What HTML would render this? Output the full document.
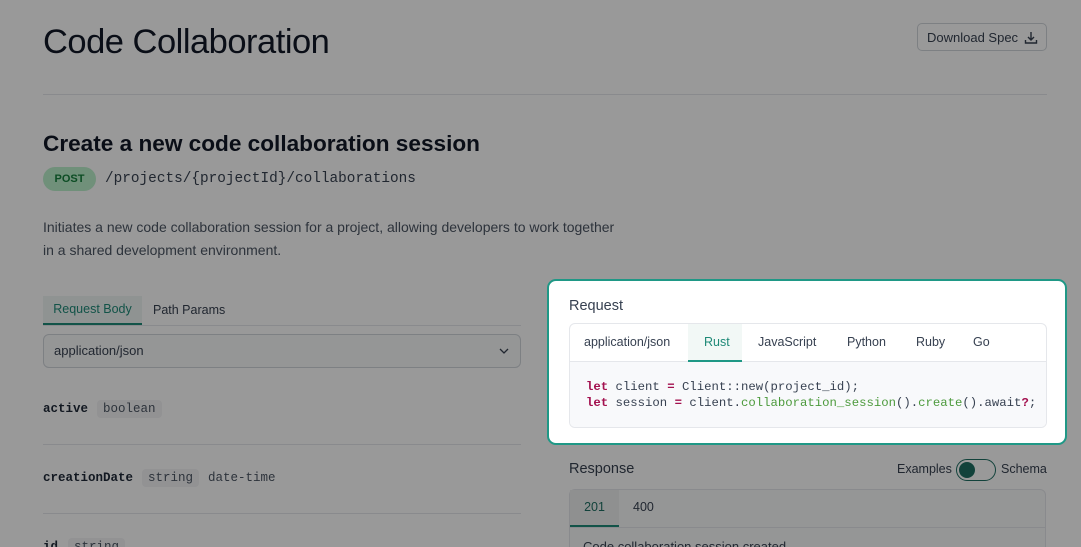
<!DOCTYPE html><html><head><style>
html,body{margin:0;width:1081px;height:547px;overflow:hidden}
body{background:#fff;font-family:"Liberation Sans",sans-serif;color:#1f2937;position:relative}
.a{position:absolute}
.mono{font-family:"Liberation Mono",monospace}
#ov{position:absolute;left:0;top:0;width:1081px;height:547px;background:rgba(0,0,0,0.4);z-index:5}
</style></head><body>
<div class="a" style="left:43px;top:23px;font-size:34.5px;letter-spacing:-0.5px;color:#111827">Code Collaboration</div>
<div class="a" style="left:917px;top:23px;height:28px;border:1px solid #d1d5db;border-radius:5px;font-size:13px;color:#374151;line-height:28px;padding-left:9px;box-sizing:border-box;width:130px">Download Spec
<svg class="a" style="left:106px;top:7px" width="14" height="14" viewBox="0 0 14 14" fill="none" stroke="#374151" stroke-width="1.4"><path d="M7 1v8M4 6l3 3 3-3M1.5 9v3h11V9"/></svg></div>
<div class="a" style="left:43px;top:94px;width:1004px;height:1px;background:#e5e7eb"></div>
<div class="a" style="left:43px;top:131px;font-size:22.6px;font-weight:bold;color:#111827">Create a new code collaboration session</div>
<div class="a" style="left:43px;top:167px;width:53px;height:24px;border-radius:12px;background:#bbf0cc;color:#15803d;font-size:11px;font-weight:bold;text-align:center;line-height:24px">POST</div>
<div class="a mono" style="left:105px;top:171px;font-size:14.4px;color:#374151">/projects/{projectId}/collaborations</div>
<div class="a" style="left:43px;top:216px;font-size:14px;line-height:23px;color:#4b5563;width:578px">Initiates a new code collaboration session for a project, allowing developers to work together in a shared development environment.</div>
<div class="a" style="left:43px;width:478px;height:1px;top:325px;background:#e5e7eb"></div>
<div class="a" style="left:43px;top:296px;width:99px;height:27px;background:#eef6f4;border-bottom:2px solid #1f8a78;color:#1f8a78;font-size:12.5px;text-align:center;line-height:27px">Request Body</div>
<div class="a" style="left:153px;top:303px;font-size:12.5px;color:#374151">Path Params</div>
<div class="a" style="left:43px;top:334px;width:478px;height:34px;border:1px solid #d1d5db;border-radius:6px;box-sizing:border-box;background:#f9fafb;font-size:13px;line-height:32px;padding-left:10px;color:#374151">application/json
<svg class="a" style="left:455px;top:12px" width="10" height="8" viewBox="0 0 10 8" fill="none" stroke="#374151" stroke-width="1.3"><path d="M1 2l4 4 4-4"/></svg></div>
<div class="a mono" style="left:43px;top:402px;font-size:12.5px;font-weight:bold">active</div>
<div class="a mono" style="left:97px;top:400px;padding:2px 6px;background:#f3f4f6;border-radius:4px;font-size:12.5px;color:#4b5563">boolean</div>
<div class="a" style="left:43px;top:444px;width:478px;height:1px;background:#e5e7eb"></div>
<div class="a mono" style="left:43px;top:471px;font-size:12.5px;font-weight:bold">creationDate</div>
<div class="a mono" style="left:142px;top:469px;padding:2px 6px;background:#f3f4f6;border-radius:4px;font-size:12.5px;color:#4b5563">string</div>
<div class="a mono" style="left:208px;top:471px;font-size:12.5px;color:#4b5563">date-time</div>
<div class="a" style="left:43px;top:513px;width:478px;height:1px;background:#e5e7eb"></div>
<div class="a mono" style="left:43px;top:540px;font-size:12.5px;font-weight:bold">id</div>
<div class="a mono" style="left:68px;top:538px;padding:2px 6px;background:#f3f4f6;border-radius:4px;font-size:12.5px;color:#4b5563">string</div>
<div class="a" style="left:569px;top:461px;font-size:14.5px;color:#374151">Response</div>
<div class="a" style="left:897px;top:462px;font-size:12.5px;color:#374151">Examples</div>
<div class="a" style="left:956px;top:459px;width:38px;height:20px;border:1.5px solid #1f6f63;border-radius:11px"></div>
<div class="a" style="left:959px;top:462px;width:16px;height:16px;border-radius:8px;background:#1f6f63"></div>
<div class="a" style="left:1001px;top:462px;font-size:12.5px;color:#374151">Schema</div>
<div class="a" style="left:569px;top:489px;width:477px;height:70px;border:1px solid #e5e7eb;border-radius:6px;box-sizing:border-box;background:#f9fafb"></div>
<div class="a" style="left:570px;top:490px;width:49px;height:35px;background:#eef1f0;border-bottom:2px solid #1f8a78;color:#1f6f63;font-size:12.5px;text-align:center;line-height:35px">201</div>
<div class="a" style="left:633px;top:500px;font-size:12.5px;color:#374151">400</div>
<div class="a" style="left:570px;top:527px;width:475px;height:1px;background:#e5e7eb"></div>
<div class="a" style="left:583px;top:539px;font-size:13px;color:#374151">Code collaboration session created</div>
<div id="ov"></div>
<div class="a" style="z-index:6;left:547px;top:279px;width:520px;height:166px;border:2px solid #1f9886;border-radius:9px;box-sizing:border-box;background:#fff">
<div class="a" style="left:20px;top:17px;font-size:14.5px;color:#374151">Request</div>
<div class="a" style="left:20px;top:42px;width:478px;height:105px;border:1px solid #e5e7eb;border-radius:6px;box-sizing:border-box;overflow:hidden">
<div class="a" style="left:0;top:37px;width:100%;height:1px;background:#e5e7eb"></div>
<div class="a" style="left:0;top:38px;width:100%;height:70px;background:#f8f9fb"></div>
<div class="a" style="left:118px;top:0;width:54px;height:36px;background:#f2f8f6;border-bottom:2px solid #1f9886"></div>
<div class="a" style="top:11px;left:14px;font-size:12.5px;color:#374151;white-space:nowrap">application/json<span class="a" style="left:120px;color:#1f8a78">Rust</span><span class="a" style="left:174px">JavaScript</span><span class="a" style="left:263px">Python</span><span class="a" style="left:332px">Ruby</span><span class="a" style="left:389px">Go</span></div>
<div class="a mono" style="left:16px;top:55px;font-size:12.3px;line-height:16px;color:#374151;white-space:pre"><b style="color:#a3114f">let</b> client <b style="color:#a3114f">=</b> Client::new(project_id);
<b style="color:#a3114f">let</b> session <b style="color:#a3114f">=</b> client.<span style="color:#4c9a3c">collaboration_session</span>().<span style="color:#4c9a3c">create</span>().await<b style="color:#a3114f">?</b>;</div>
</div></div>
</body></html>
